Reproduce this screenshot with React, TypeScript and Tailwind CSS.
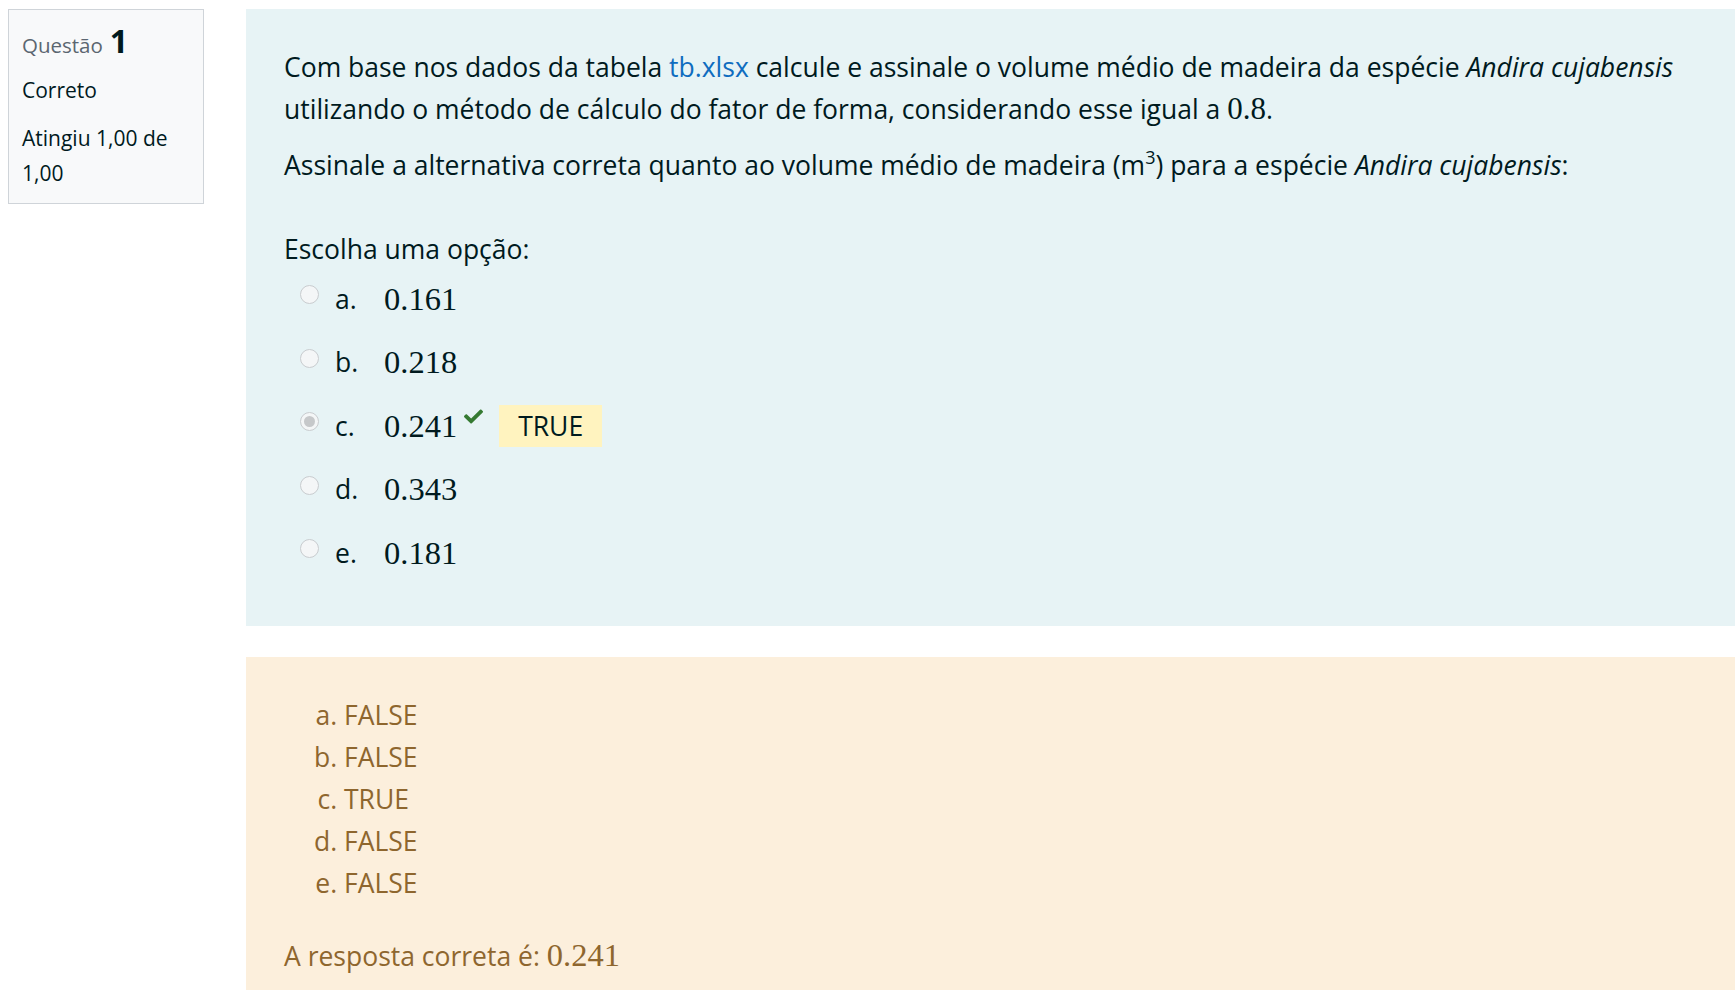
import React from 'react';

const options = [
  { letter: 'a.', value: '0.161' },
  { letter: 'b.', value: '0.218' },
  { letter: 'c.', value: '0.241', checked: true },
  { letter: 'd.', value: '0.343' },
  { letter: 'e.', value: '0.181' },
];

const feedback = ['FALSE', 'FALSE', 'TRUE', 'FALSE', 'FALSE'];

const sans = "font-['Open_Sans','Noto_Sans',sans-serif]";
const math = "font-['Liberation_Serif','DejaVu_Serif',serif]";

function Radio({ checked }: { checked?: boolean }) {
  return (
    <span className="flex h-[19px] w-[19px] items-center justify-center rounded-full border border-[#c9cccf] bg-[#f4f6f7]">
      {checked && <span className="h-[11px] w-[11px] rounded-full bg-[#c6c8ca]" />}
    </span>
  );
}

function Check() {
  return (
    <svg viewBox="0 60 512 392" className="h-[15px] w-[19px] fill-[#357a32]">
      <path d="M173.9 439.4l-166.4-166.4c-10-10-10-26.2 0-36.2l36.2-36.2c10-10 26.2-10 36.2 0L192 312.7 432.1 72.6c10-10 26.2-10 36.2 0l36.2 36.2c10 10 10 26.2 0 36.2l-294.4 294.4c-10 10-26.2 10-36.2 0z" />
    </svg>
  );
}

export default function App() {
  return (
    <div className={`flex min-h-[990px] bg-white pl-[8px] pt-[9px] text-[#001a1e] ${sans}`}>
      {/* info box */}
      <div className="h-[195px] w-[196px] shrink-0 border border-[#cfd4d9] bg-[#f8f9fa] px-[13px] pt-[15px]">
        <h3 className="flex h-[40px] items-baseline">
          <span className="text-[20.5px] text-[#5b6670]">Questão</span>
          <span className="ml-[7px] text-[32px] font-bold leading-none">1</span>
        </h3>
        <div className="mt-[8px] text-[21px] leading-[35px]">Correto</div>
        <div className="mt-[13px] text-[21px] leading-[35px]">Atingiu 1,00 de 1,00</div>
      </div>

      <div className="ml-[42px] flex flex-1 flex-col">
        {/* question */}
        <section className="h-[617px] bg-[#e7f3f5] px-[38px] pt-[37px] text-[26.5px] leading-[42px]">
          <p>
            Com base nos dados da tabela <a className="text-[#0f6cbf]">tb.xlsx</a> calcule e assinale o volume médio de madeira da espécie <em>Andira cujabensis</em> utilizando o método de cálculo do fator de forma, considerando esse igual a <span className={`${math} text-[31px]`}>0.8</span>.
          </p>
          <p className="mt-[14px]">
            Assinale a alternativa correta quanto ao volume médio de madeira (m<sup className="top-[-11px] text-[18px]">3</sup>) para a espécie <em>Andira cujabensis</em>:
          </p>

          <div className="mt-[42px]">Escolha uma opção:</div>
          <div className="-mt-[3px]">
            {options.map(o => (
              <div key={o.letter} className="flex h-[63.5px] items-center">
                <span className="ml-[16px] -translate-y-[4px]">
                  <Radio checked={o.checked} />
                </span>
                <span className="ml-[16px] w-[49px]">{o.letter}</span>
                <span className={`${math} text-[32.5px]`}>{o.value}</span>
                {o.checked && (
                  <>
                    <span className="ml-[7px] -translate-y-[9px]">
                      <Check />
                    </span>
                    <span className="ml-[16px] flex h-[42px] items-center bg-[#fff3bf] px-[19px]">TRUE</span>
                  </>
                )}
              </div>
            ))}
          </div>
        </section>

        {/* feedback */}
        <section className="mt-[31px] flex-1 bg-[#fcefdc] px-[38px] pb-[14px] pt-[37px] text-[26.5px] leading-[42px] text-[#8e662e]">
          <ol className="list-[lower-alpha] pl-[60px]">
            {feedback.map((f, i) => (
              <li key={i}>{f}</li>
            ))}
          </ol>
          <div className="mt-[30px]">
            A resposta correta é: <span className={`${math} text-[32.5px]`}>0.241</span>
          </div>
        </section>
      </div>
    </div>
  );
}
